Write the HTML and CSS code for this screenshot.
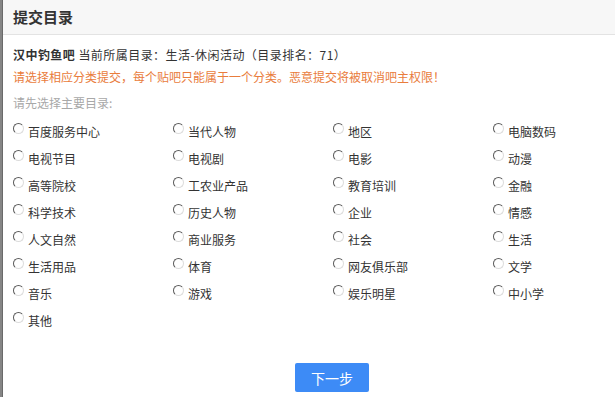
FILE: index.html
```html
<!DOCTYPE html>
<html lang="zh-CN">
<head>
<meta charset="utf-8">
<title>提交目录</title>
<link rel="stylesheet" href="styles.css">
</head>
<body>
<div class="backdrop">
  <div class="dialog">
    <div class="dialog-head">提交目录</div>
    <div class="dialog-body">
      <p class="info"><b class="forum">汉中钓鱼吧</b> 当前所属目录：生活-休闲活动（目录排名：71）</p>
      <p class="warn">请选择相应分类提交，每个贴吧只能属于一个分类。恶意提交将被取消吧主权限！</p>
      <p class="hint">请先选择主要目录:</p>
      <div class="cats">
        <label class="cat"><input type="radio" name="c"><span>百度服务中心</span></label>
        <label class="cat"><input type="radio" name="c"><span>当代人物</span></label>
        <label class="cat"><input type="radio" name="c"><span>地区</span></label>
        <label class="cat"><input type="radio" name="c"><span>电脑数码</span></label>
        <label class="cat"><input type="radio" name="c"><span>电视节目</span></label>
        <label class="cat"><input type="radio" name="c"><span>电视剧</span></label>
        <label class="cat"><input type="radio" name="c"><span>电影</span></label>
        <label class="cat"><input type="radio" name="c"><span>动漫</span></label>
        <label class="cat"><input type="radio" name="c"><span>高等院校</span></label>
        <label class="cat"><input type="radio" name="c"><span>工农业产品</span></label>
        <label class="cat"><input type="radio" name="c"><span>教育培训</span></label>
        <label class="cat"><input type="radio" name="c"><span>金融</span></label>
        <label class="cat"><input type="radio" name="c"><span>科学技术</span></label>
        <label class="cat"><input type="radio" name="c"><span>历史人物</span></label>
        <label class="cat"><input type="radio" name="c"><span>企业</span></label>
        <label class="cat"><input type="radio" name="c"><span>情感</span></label>
        <label class="cat"><input type="radio" name="c"><span>人文自然</span></label>
        <label class="cat"><input type="radio" name="c"><span>商业服务</span></label>
        <label class="cat"><input type="radio" name="c"><span>社会</span></label>
        <label class="cat"><input type="radio" name="c"><span>生活</span></label>
        <label class="cat"><input type="radio" name="c"><span>生活用品</span></label>
        <label class="cat"><input type="radio" name="c"><span>体育</span></label>
        <label class="cat"><input type="radio" name="c"><span>网友俱乐部</span></label>
        <label class="cat"><input type="radio" name="c"><span>文学</span></label>
        <label class="cat"><input type="radio" name="c"><span>音乐</span></label>
        <label class="cat"><input type="radio" name="c"><span>游戏</span></label>
        <label class="cat"><input type="radio" name="c"><span>娱乐明星</span></label>
        <label class="cat"><input type="radio" name="c"><span>中小学</span></label>
        <label class="cat"><input type="radio" name="c"><span>其他</span></label>
      </div>
      <div class="actions"><button class="next" type="button">下一步</button></div>
    </div>
  </div>
</div>
</body>
</html>
```

FILE: styles.css
```css
html, body {
  margin: 0;
  padding: 0;
  width: 615px;
  height: 397px;
  overflow: hidden;
  background: #858585;
  font-family: "Noto Sans CJK SC", "Noto Sans", sans-serif;
  color: #333;
}

.backdrop {
  display: flex;
  padding-left: 2px;
  height: 397px;
}

.dialog {
  flex: 0 0 auto;
  width: 658px;
  height: 397px;
  background: #fff;
  border-left: 1px solid #6a6a6a;
}

.dialog-head {
  height: 34px;
  line-height: 34px;
  background: #f7f7f7;
  border-bottom: 1px solid #e3e3e3;
  padding-left: 10px;
  font-size: 15px;
  font-weight: bold;
  color: #333;
}

.dialog-body {
  padding: 9px 0 0 10px;
}

.dialog-body p {
  margin: 0;
  font-size: 12px;
  line-height: 22px;
  white-space: nowrap;
}

.info {
  letter-spacing: 0.45px;
}

.forum {
  font-weight: bold;
}

.warn {
  color: #e97c3c;
}

.dialog-body .hint {
  margin-top: 4px;
  color: #a8a8a8;
}

.cats {
  margin-top: 4px;
  display: grid;
  grid-template-columns: repeat(4, 160px);
  grid-auto-rows: 27px;
}

.cat {
  display: flex;
  align-items: flex-start;
  font-size: 12px;
  line-height: 27px;
  white-space: nowrap;
}

.cat input {
  appearance: none;
  -webkit-appearance: none;
  width: 11px;
  height: 11px;
  margin: 5px 4px 0 0;
  border-radius: 50%;
  border: 1px solid;
  border-color: #5a5a5a #dcdcdc #dcdcdc #5a5a5a;
  background: #fff;
  flex: 0 0 auto;
}

.actions {
  display: flex;
  justify-content: center;
  padding-right: 10px;
  margin-top: 29px;
}

.next {
  width: 74px;
  height: 29px;
  border: 0;
  border-radius: 2px;
  background: #3d8bf6;
  color: #fff;
  font-family: "Noto Sans CJK SC", sans-serif;
  font-size: 14px;
  padding: 0;
}
```
